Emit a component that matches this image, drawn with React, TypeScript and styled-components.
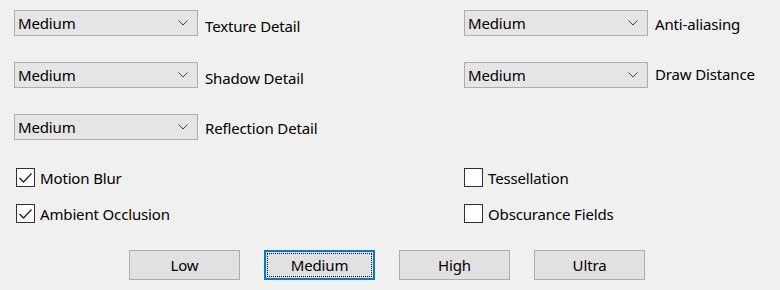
import styled, { createGlobalStyle } from "styled-components"
import { useState } from "react"

const GlobalStyle = createGlobalStyle`
    html, body {
        margin: 0;
        padding: 0;
        background: #f0f0f0;
    }
    body {
        font-family: "Noto Sans", "Open Sans", sans-serif;
        font-size: 15px;
        letter-spacing: -0.15px;
        color: #000;
    }
`

const Page = styled.div`
    width: 780px;
    height: 290px;
    box-sizing: border-box;
    padding: 10px 14px 0 14px;
    display: flex;
    flex-direction: column;
`

const DropGrid = styled.div`
    display: grid;
    grid-template-columns: 450px 1fr;
    grid-auto-rows: 26px;
    row-gap: 26px;
`

const Field = styled.div`
    display: flex;
    align-items: center;
    gap: 7px;
`

const Select = styled.div`
    width: 184px;
    height: 26px;
    box-sizing: border-box;
    border: 1px solid #adadad;
    background: #e5e5e5;
    display: flex;
    align-items: center;
    justify-content: space-between;
    padding: 0 9px 0 3px;
    line-height: 1;
`

const Label = styled.span<{ $shift: number }>`
    position: relative;
    top: ${p => p.$shift}px;
    white-space: nowrap;
`

const CheckGrid = styled.div`
    margin-top: 28px;
    display: grid;
    grid-template-columns: 448px 1fr;
    grid-auto-rows: 19px;
    row-gap: 17px;
`

const CheckRow = styled.label`
    display: flex;
    align-items: center;
    gap: 5px;
    padding-left: 2px;
    cursor: default;
`

const Box = styled.span`
    width: 19px;
    height: 19px;
    box-sizing: border-box;
    border: 1px solid #333;
    background: #fff;
    display: flex;
    align-items: center;
    justify-content: center;
`

const ButtonRow = styled.div`
    margin-top: 27px;
    padding-left: 115px;
    display: flex;
    gap: 24px;
`

const PresetButton = styled.button<{ $focused?: boolean }>`
    width: 111px;
    height: 30px;
    box-sizing: border-box;
    font: inherit;
    letter-spacing: inherit;
    color: #000;
    background: #e1e1e1;
    border: ${p => (p.$focused ? "2px solid #0078d7" : "1px solid #adadad")};
    outline: ${p => (p.$focused ? "1px dotted #000" : "none")};
    outline-offset: ${p => (p.$focused ? "-4px" : "0")};
    padding: 0;
`

const Chevron = () => (
    <svg width="10" height="6" viewBox="0 0 10 6">
        <path d="M0.5 0.5 L5 5 L9.5 0.5" fill="none" stroke="#444" strokeWidth="1" />
    </svg>
)

const Check = () => (
    <svg width="15" height="12" viewBox="0 0 15 12">
        <path d="M1.5 6 L5.5 10 L13.5 1.5" fill="none" stroke="#222" strokeWidth="1.3" />
    </svg>
)

const Dropdown = ({ label, shift }: { label: string; shift: number }) => (
    <Field>
        <Select>
            <span>Medium</span>
            <Chevron />
        </Select>
        <Label $shift={shift}>{label}</Label>
    </Field>
)

const CheckItem = ({ label, initial }: { label: string; initial: boolean }) => {
    const [checked, setChecked] = useState(initial)
    return (
        <CheckRow onClick={() => setChecked(!checked)}>
            <Box>{checked && <Check />}</Box>
            <span>{label}</span>
        </CheckRow>
    )
}

const App = () => {
    const [preset, setPreset] = useState("Medium")
    return (
        <Page>
            <GlobalStyle />
            <DropGrid>
                <Dropdown label="Texture Detail" shift={3} />
                <Dropdown label="Anti-aliasing" shift={1} />
                <Dropdown label="Shadow Detail" shift={3} />
                <Dropdown label="Draw Distance" shift={-1} />
                <Dropdown label="Reflection Detail" shift={1} />
            </DropGrid>
            <CheckGrid>
                <CheckItem label="Motion Blur" initial={true} />
                <CheckItem label="Tessellation" initial={false} />
                <CheckItem label="Ambient Occlusion" initial={true} />
                <CheckItem label="Obscurance Fields" initial={false} />
            </CheckGrid>
            <ButtonRow>
                {["Low", "Medium", "High", "Ultra"].map(name => (
                    <PresetButton key={name} $focused={preset === name} onClick={() => setPreset(name)}>
                        {name}
                    </PresetButton>
                ))}
            </ButtonRow>
        </Page>
    )
}

export default App
